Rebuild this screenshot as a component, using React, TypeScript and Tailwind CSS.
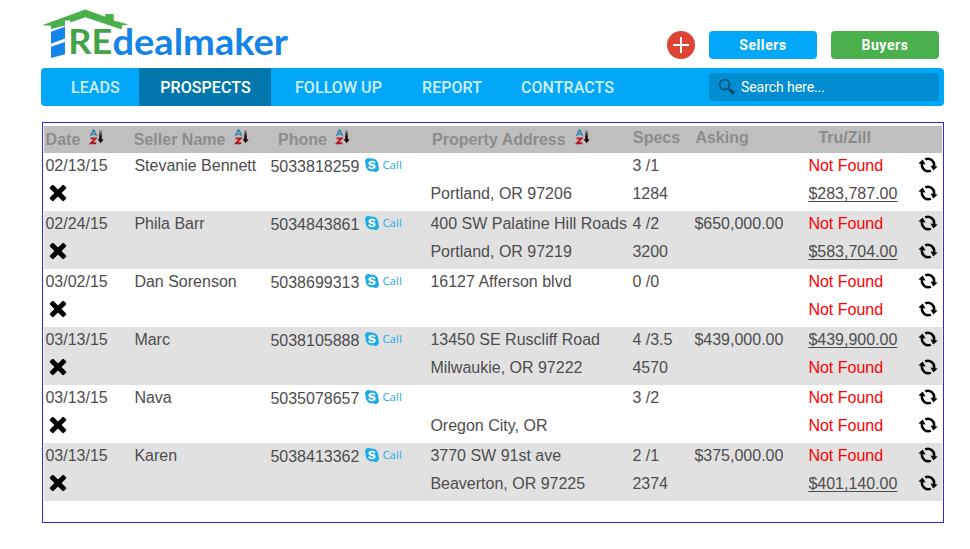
import React from "react";
import { FaSkype } from "react-icons/fa";

type Value = string | null;
interface Lead {
  date: string;
  name: string;
  phone: string;
  street: string;
  city: string;
  rooms: string;
  area: string;
  asking: string;
  trulia: Value;
  zillow: Value;
}

const leads: Lead[] = [
  { date: "02/13/15", name: "Stevanie Bennett", phone: "5033818259", street: "", city: "Portland, OR 97206", rooms: "3 /1", area: "1284", asking: "", trulia: null, zillow: "$283,787.00" },
  { date: "02/24/15", name: "Phila Barr", phone: "5034843861", street: "400 SW Palatine Hill Roads", city: "Portland, OR 97219", rooms: "4 /2", area: "3200", asking: "$650,000.00", trulia: null, zillow: "$583,704.00" },
  { date: "03/02/15", name: "Dan Sorenson", phone: "5038699313", street: "16127 Afferson blvd", city: "", rooms: "0 /0", area: "", asking: "", trulia: null, zillow: null },
  { date: "03/13/15", name: "Marc", phone: "5038105888", street: "13450 SE Ruscliff Road", city: "Milwaukie, OR 97222", rooms: "4 /3.5", area: "4570", asking: "$439,000.00", trulia: "$439,900.00", zillow: null },
  { date: "03/13/15", name: "Nava", phone: "5035078657", street: "", city: "Oregon City, OR", rooms: "3 /2", area: "", asking: "", trulia: null, zillow: null },
  { date: "03/13/15", name: "Karen", phone: "5038413362", street: "3770 SW 91st ave", city: "Beaverton, OR 97225", rooms: "2 /1", area: "2374", asking: "$375,000.00", trulia: null, zillow: "$401,140.00" },
];

const columns = "grid grid-cols-[89.4px_136px_160px_202px_62px_114px_110px_24px]";

function Logo() {
  return (
    <svg width="250" height="56" viewBox="40 6 250 56" className="block">
      <path d="M42 25.2 85.3 9.6 105.3 16.8V14h8.4v6.4L128.5 24.5 121.8 25.6V29.4L85.3 17.2 70.3 22.6V20.4H65V25.6L51 29V25.8Z" fill="#49b04b" />
      <path d="M51 31.8 65 26.8V38.6L51 43.8ZM51 46.8 65 41.9V54.2L51 58Z" fill="#1484e8" />
      <text x="68.2" y="54.3" fontSize="35.2" fontWeight="700" fill="#43a447" textLength="44" lengthAdjust="spacingAndGlyphs" fontFamily="Lato, sans-serif">RE</text>
      <text x="112.5" y="54.6" fontSize="36.5" fontWeight="700" fill="#1484e8" textLength="175.5" lengthAdjust="spacingAndGlyphs" fontFamily="Lato, sans-serif">dealmaker</text>
    </svg>
  );
}

function SortIcon() {
  return (
    <svg width="15" height="16" viewBox="0 0 15 16" className="block shrink-0">
      <defs>
        <linearGradient id="shaft" x1="0" y1="0" x2="0" y2="1">
          <stop offset="0" stopColor="#000" stopOpacity="0.15" />
          <stop offset="0.6" stopColor="#1a0c0c" />
        </linearGradient>
      </defs>
      <path d="M1.6 7 4.2 1H5L7.6 7M2.6 5.2H6.6" fill="none" stroke="#3a87ad" strokeWidth="1.6" />
      <path d="M1.6 9.4H6.6L2 14.2H7.2" fill="none" stroke="#b5121b" strokeWidth="1.9" />
      <rect x="10.2" y="1" width="2.6" height="11" fill="url(#shaft)" />
      <path d="M8.6 10.2H14.6L11.6 14.2Z" fill="#1a0c0c" />
    </svg>
  );
}

function RefreshIcon() {
  return (
    <svg width="20" height="16" viewBox="0 0 20 16" className="block">
      <g fill="none" stroke="#000" strokeWidth="2.6">
        <path d="M7.2 2.4A6.2 6.2 0 0 1 16 9" />
        <path d="M12.8 13.6A6.2 6.2 0 0 1 4 7" />
      </g>
      <path d="M12.4 8.6 19.6 9.4 15.4 13.4ZM7.6 7.4 .4 6.6 4.6 2.6Z" fill="#000" />
    </svg>
  );
}

function CrossIcon() {
  return (
    <svg width="18" height="17" viewBox="0 0 18 17" className="block">
      <g transform="translate(9 8) rotate(45)">
        <rect x="-9.8" y="-2.5" width="19.6" height="5" rx="1.2" />
        <rect x="-2.5" y="-9.8" width="5" height="19.6" rx="1.2" />
      </g>
    </svg>
  );
}

function Estimate({ value }: { value: Value }) {
  return value ? (
    <span className="underline underline-offset-2 decoration-1">{value}</span>
  ) : (
    <span className="text-[#ff0000]">Not Found</span>
  );
}

function Row({ lead, shaded }: { lead: Lead; shaded: boolean }) {
  return (
    <div className={`h-[58px] text-[#4d4d4d] text-[16px] whitespace-nowrap ${shaded ? "bg-[#e1e1e1]" : "bg-white"}`}>
      <div className={`${columns} h-[26px] pl-px leading-[25px]`}>
        <span className="pl-[0.4px]">{lead.date}</span>
        <span>{lead.name}</span>
        <span className="flex pt-px">
          {lead.phone}
          <span className="flex h-[22px] items-center pl-[5px] text-[#1bace8] text-[11.5px]">
            <span className="mr-0.5 rounded-full bg-[radial-gradient(circle,#fff_50%,transparent_51%)]">
              <FaSkype size={16} />
            </span>
            <span className="-mt-px font-['Open_Sans',sans-serif]">Call</span>
          </span>
        </span>
        <span>{lead.street}</span>
        <span>{lead.rooms}</span>
        <span>{lead.asking}</span>
        <Estimate value={lead.trulia} />
        <span className="pt-1"><RefreshIcon /></span>
      </div>
      <div className={`${columns} h-7 pl-px leading-[30px]`}>
        <span className="pl-1 pt-[6px]"><CrossIcon /></span>
        <span />
        <span />
        <span>{lead.city}</span>
        <span>{lead.area}</span>
        <span />
        <Estimate value={lead.zillow} />
        <span className="pt-[6px]"><RefreshIcon /></span>
      </div>
    </div>
  );
}

export default function App() {
  return (
    <div className="h-[549px] w-[970px] overflow-hidden bg-white font-['Liberation_Sans',Arial,sans-serif]">
      <header className="flex h-[68px] items-start pl-10 pt-1.5">
        <Logo />
        <div className="flex items-center pl-[377px] pt-[25px] font-[Roboto,sans-serif] text-[14px] font-bold tracking-[0.6px] text-white">
          <button className="flex size-7 items-center justify-center rounded-full bg-[#dd4434]">
            <svg width="16" height="16" viewBox="0 0 16 16"><path d="M8 0V16M0 8H16" stroke="#fff" strokeWidth="2" /></svg>
          </button>
          <button className="ml-3.5 h-7 w-[108px] rounded bg-[#03a7f8]">Sellers</button>
          <button className="ml-3.5 h-7 w-[108px] rounded bg-[#49b04b]">Buyers</button>
        </div>
      </header>
      <nav className="ml-[41px] flex h-[38px] w-[903px] items-center rounded bg-[#03a7f8] font-[Roboto,sans-serif] text-[16px] font-medium tracking-[0.06px] text-[#cdedfe]">
        <span className="w-[98px] pl-[30px] pt-0.5">LEADS</span>
        <span className="flex h-full w-[132px] items-center justify-center bg-[#0277ad] pl-px pt-0.5 text-white">PROSPECTS</span>
        <span className="w-[127px] pl-6 pt-0.5">FOLLOW UP</span>
        <span className="w-[99px] pl-6 pt-0.5">REPORT</span>
        <span className="w-[212px] pl-6 pt-0.5">CONTRACTS</span>
        <div className="flex h-7 w-[230px] items-center rounded bg-[#028dd1] pl-[9px] text-[14px] font-normal tracking-[-0.06px] text-white">
          <svg width="18" height="18" viewBox="0 0 18 18" className="mr-[5px]">
            <circle cx="6.6" cy="6.6" r="5" fill="none" stroke="#0b5072" strokeWidth="1.5" />
            <path d="M10.2 10.2 12 12" stroke="#0b5072" strokeWidth="1.5" />
            <path d="M11.6 11.6 16 15.5" stroke="#0b4058" strokeWidth="3" />
          </svg>
          Search here...
        </div>
      </nav>
      <main className="ml-[42px] mt-4 h-[401px] w-[902px] border border-[#2a2aee] px-px pt-[3px]">
        <div className={`${columns} h-[27px] whitespace-nowrap bg-[#bfbfbf] pl-px text-[16px] font-bold leading-[26px] text-[#8c8c8c]`}>
          <span className="flex pl-[0.6px] pt-px">Date<span className="ml-[9px] pt-[2px]"><SortIcon /></span></span>
          <span className="-ml-[0.6px] flex pt-px">Seller Name<span className="ml-[9px] pt-[2px]"><SortIcon /></span></span>
          <span className="flex pl-[7.6px] pt-px">Phone<span className="ml-[8px] pt-[2px]"><SortIcon /></span></span>
          <span className="flex pl-[1.6px] pt-px">Property Address<span className="ml-[9px] pt-[2px]"><SortIcon /></span></span>
          <span className="-mt-px pl-[0.6px]">Specs</span>
          <span className="-mt-px pl-[1px]">Asking</span>
          <span className="-mt-px pl-[10px]">Tru/Zill</span>
          <span />
        </div>
        {leads.map((lead, i) => (
          <Row key={i} lead={lead} shaded={i % 2 === 1} />
        ))}
      </main>
    </div>
  );
}
